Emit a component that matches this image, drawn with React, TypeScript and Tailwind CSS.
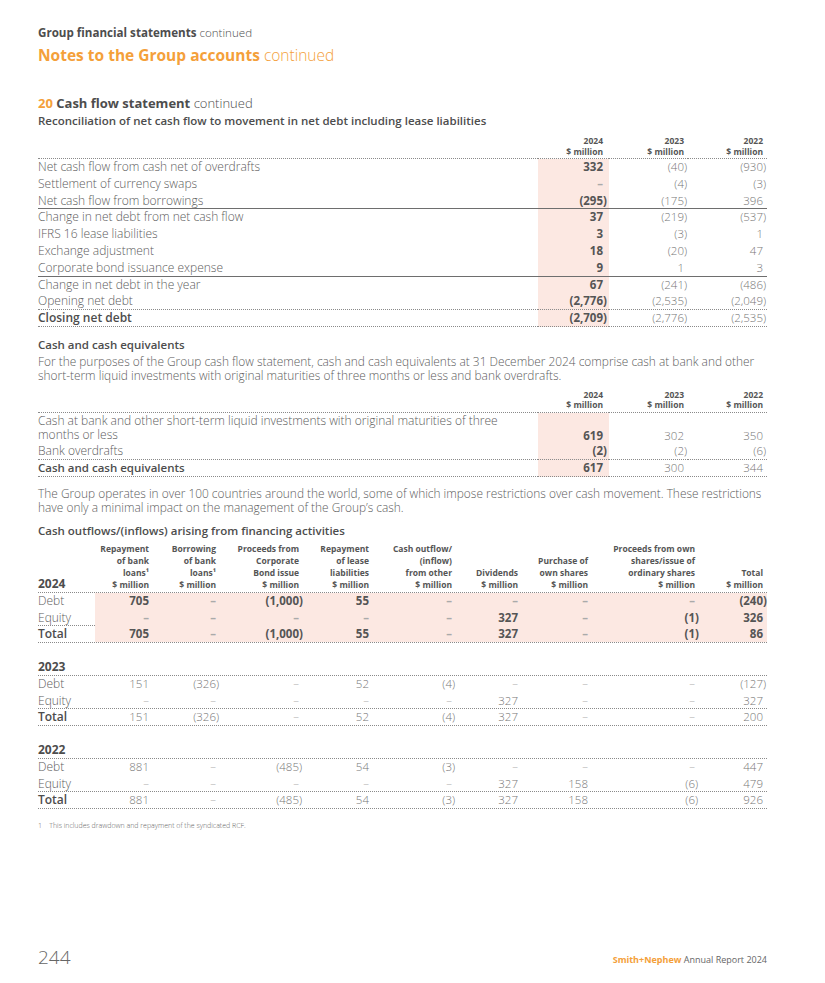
import React from "react";

const N = ({ v }: { v: string }) =>
  v.endsWith(")") ? (
    <>
      {v.slice(0, -1)}
      <span className="inline-block w-0">)</span>
    </>
  ) : (
    <>{v}</>
  );

type R1 = { l: string; a: string; b: string; c: string; line?: "solid" | "dot"; bold?: boolean };

const t1: R1[] = [
  { l: "Net cash flow from cash net of overdrafts", a: "332", b: "(40)", c: "(930)" },
  { l: "Settlement of currency swaps", a: "–", b: "(4)", c: "(3)" },
  { l: "Net cash flow from borrowings", a: "(295)", b: "(175)", c: "396", line: "solid" },
  { l: "Change in net debt from net cash flow", a: "37", b: "(219)", c: "(537)" },
  { l: "IFRS 16 lease liabilities", a: "3", b: "(3)", c: "1" },
  { l: "Exchange adjustment", a: "18", b: "(20)", c: "47" },
  { l: "Corporate bond issuance expense", a: "9", b: "1", c: "3", line: "solid" },
  { l: "Change in net debt in the year", a: "67", b: "(241)", c: "(486)" },
  { l: "Opening net debt", a: "(2,776)", b: "(2,535)", c: "(2,049)", line: "dot" },
  { l: "Closing net debt", a: "(2,709)", b: "(2,776)", c: "(2,535)", line: "dot", bold: true },
];

const lineCls = (line?: "solid" | "dot") =>
  line === "solid"
    ? "border-b border-solid border-[#6e6e6e]"
    : line === "dot"
    ? "border-b border-dotted border-[#8a8a8a]"
    : "";

const YearHead = ({ y }: { y: string }) => (
  <div className="text-[8.5px] font-bold leading-[10.5px] text-[#555] text-right">
    {y}
    <br />$ million
  </div>
);

const t3Head: string[][] = [
  ["Repayment", "of bank", "loans¹", "$ million"],
  ["Borrowing", "of bank", "loans¹", "$ million"],
  ["Proceeds from", "Corporate", "Bond issue", "$ million"],
  ["Repayment", "of lease", "liabilities", "$ million"],
  ["Cash outflow/", "(inflow)", "from other", "$ million"],
  ["Dividends", "$ million"],
  ["Purchase of", "own shares", "$ million"],
  ["Proceeds from own", "shares/issue of", "ordinary shares", "$ million"],
  ["Total", "$ million"],
];

const blocks: { y: string; rows: { l: string; v: string[] }[] }[] = [
  {
    y: "2024",
    rows: [
      { l: "Debt", v: ["705", "–", "(1,000)", "55", "–", "–", "–", "–", "(240)"] },
      { l: "Equity", v: ["–", "–", "–", "–", "–", "327", "–", "(1)", "326"] },
      { l: "Total", v: ["705", "–", "(1,000)", "55", "–", "327", "–", "(1)", "86"] },
    ],
  },
  {
    y: "2023",
    rows: [
      { l: "Debt", v: ["151", "(326)", "–", "52", "(4)", "–", "–", "–", "(127)"] },
      { l: "Equity", v: ["–", "–", "–", "–", "–", "327", "–", "–", "327"] },
      { l: "Total", v: ["151", "(326)", "–", "52", "(4)", "327", "–", "–", "200"] },
    ],
  },
  {
    y: "2022",
    rows: [
      { l: "Debt", v: ["881", "–", "(485)", "54", "(3)", "–", "–", "–", "447"] },
      { l: "Equity", v: ["–", "–", "–", "–", "–", "327", "158", "(6)", "479"] },
      { l: "Total", v: ["881", "–", "(485)", "54", "(3)", "327", "158", "(6)", "926"] },
    ],
  },
];

const G3 = "grid grid-cols-[57px_58px_67px_83px_70px_83px_66px_70px_107px_68px]";

export default function App() {
  return (
    <div className="w-[825px] h-[983px] bg-white pl-[38px] pr-[58px] flex flex-col font-['Open_Sans',sans-serif] text-[#5c5c5c]">
      {/* header */}
      <div className="mt-[25px] text-[11.6px] leading-[16px] text-[#4d4d4d]">
        <span className="font-bold">Group financial statements</span>{" "}
        <span className="font-light">continued</span>
      </div>
      <div className="mt-[4px] text-[15.5px] leading-[20px] text-[#f4a03a]">
        <span className="font-bold">Notes to the Group accounts</span>{" "}
        <span className="font-light">continued</span>
      </div>

      <div className="mt-[30px] text-[13px] leading-[16px] text-[#4d4d4d]">
        <span className="font-bold text-[#f4a03a]">20</span>{" "}
        <span className="font-bold">Cash flow statement</span>{" "}
        <span className="font-light">continued</span>
      </div>
      <div className="mt-[2px] text-[11.5px] leading-[15px] font-semibold text-[#4d4d4d]">
        Reconciliation of net cash flow to movement in net debt including lease liabilities
      </div>

      {/* table 1 */}
      <div className="mt-[6px] grid grid-cols-[500px_71px_79px_79px] text-[11.5px]">
        <div className="h-[25px] border-b border-dotted border-[#8a8a8a]" />
        <div className="h-[25px] pt-[2px] pr-[6px] border-b border-dotted border-[#8a8a8a]">
          <YearHead y="2024" />
        </div>
        <div className="h-[25px] pt-[2px] pr-[4px] border-b border-dotted border-[#8a8a8a]">
          <YearHead y="2023" />
        </div>
        <div className="h-[25px] pt-[2px] pr-[4px] border-b border-dotted border-[#8a8a8a]">
          <YearHead y="2022" />
        </div>
        {t1.map((r) => (
          <React.Fragment key={r.l}>
            <div
              className={`h-[16.8px] leading-[16px] text-[12px] ${r.bold ? "font-semibold text-[#4d4d4d]" : "font-light"} ${lineCls(r.line)}`}
            >
              {r.l}
            </div>
            <div
              className={`h-[16.8px] leading-[16px] text-right pr-[6px] bg-[#fce8e2] font-bold text-[#555] ${lineCls(r.line)}`}
            >
              {r.a === "–" ? <span className="text-[#aaa]">–</span> : <N v={r.a} />}
            </div>
            <div className={`h-[16.8px] leading-[16px] text-right pr-[4px] font-light text-[#777] ${lineCls(r.line)}`}>
              <N v={r.b} />
            </div>
            <div className={`h-[16.8px] leading-[16px] text-right pr-[4px] font-light text-[#777] ${lineCls(r.line)}`}>
              <N v={r.c} />
            </div>
          </React.Fragment>
        ))}
      </div>

      {/* cash and cash equivalents */}
      <div className="mt-[10px] text-[11.5px] leading-[15px] font-semibold text-[#4d4d4d]">
        Cash and cash equivalents
      </div>
      <div className="mt-[2px] text-[11.9px] leading-[14px] font-light">
        For the purposes of the Group cash flow statement, cash and cash equivalents at 31 December 2024 comprise cash at bank and other
        <br />
        short-term liquid investments with original maturities of three months or less and bank overdrafts.
      </div>

      <div className="mt-[7px] grid grid-cols-[500px_71px_79px_79px] text-[11.5px]">
        <div className="h-[24px] border-b border-dotted border-[#8a8a8a]" />
        <div className="h-[24px] pt-[1px] pr-[6px] border-b border-dotted border-[#8a8a8a]">
          <YearHead y="2024" />
        </div>
        <div className="h-[24px] pt-[1px] pr-[4px] border-b border-dotted border-[#8a8a8a]">
          <YearHead y="2023" />
        </div>
        <div className="h-[24px] pt-[1px] pr-[4px] border-b border-dotted border-[#8a8a8a]">
          <YearHead y="2022" />
        </div>

        <div className="h-[30px] text-[12px] leading-[14px] pt-[1px] font-light">
          Cash at bank and other short-term liquid investments with original maturities of three
          <br />
          months or less
        </div>
        <div className="h-[30px] flex items-end justify-end pr-[6px] bg-[#fce8e2] font-bold text-[#555] leading-[14px]">
          619
        </div>
        <div className="h-[30px] flex items-end justify-end pr-[4px] font-light text-[#777] leading-[14px]">302</div>
        <div className="h-[30px] flex items-end justify-end pr-[4px] font-light text-[#777] leading-[14px]">350</div>

        <div className="h-[17px] text-[12px] leading-[16px] font-light border-b border-dotted border-[#8a8a8a]">Bank overdrafts</div>
        <div className="h-[17px] leading-[16px] text-right pr-[6px] bg-[#fce8e2] font-bold text-[#555] border-b border-dotted border-[#8a8a8a]">
          <N v="(2)" />
        </div>
        <div className="h-[17px] leading-[16px] text-right pr-[4px] font-light text-[#777] border-b border-dotted border-[#8a8a8a]">
          <N v="(2)" />
        </div>
        <div className="h-[17px] leading-[16px] text-right pr-[4px] font-light text-[#777] border-b border-dotted border-[#8a8a8a]">
          <N v="(6)" />
        </div>

        <div className="h-[17px] leading-[16px] font-semibold text-[#4d4d4d] border-b border-dotted border-[#8a8a8a]">
          Cash and cash equivalents
        </div>
        <div className="h-[17px] leading-[16px] text-right pr-[6px] bg-[#fce8e2] font-bold text-[#555] border-b border-dotted border-[#8a8a8a]">
          617
        </div>
        <div className="h-[17px] leading-[16px] text-right pr-[4px] font-light text-[#777] border-b border-dotted border-[#8a8a8a]">
          300
        </div>
        <div className="h-[17px] leading-[16px] text-right pr-[4px] font-light text-[#777] border-b border-dotted border-[#8a8a8a]">
          344
        </div>
      </div>

      <div className="mt-[9px] text-[11.9px] leading-[14px] font-light">
        The Group operates in over 100 countries around the world, some of which impose restrictions over cash movement. These restrictions
        <br />
        have only a minimal impact on the management of the Group’s cash.
      </div>

      <div className="mt-[9px] text-[11.5px] leading-[15px] font-semibold text-[#4d4d4d]">
        Cash outflows/(inflows) arising from financing activities
      </div>

      {/* table 3 */}
      <div className={`mt-[5px] ${G3} border-b border-dotted border-[#8a8a8a]`}>
        <div className="flex items-end text-[12px] font-bold leading-[14px] text-[#4d4d4d] pb-[1px]">2024</div>
        {t3Head.map((h, i) => (
          <div key={i} className="flex flex-col justify-end text-right pr-[4px] text-[8.5px] font-bold leading-[12px] text-[#555] pb-[1px]">
            {h.map((t) => (
              <div key={t}>{t}</div>
            ))}
          </div>
        ))}
      </div>

      {blocks.map((b, bi) => (
        <div key={b.y} className="flex flex-col">
          {bi > 0 && (
            <div className="mt-[17px] h-[16px] text-[12px] font-bold leading-[14px] text-[#4d4d4d] border-b border-dotted border-[#8a8a8a]">
              {b.y}
            </div>
          )}
          {b.rows.map((r, ri) => {
            const hl = bi === 0;
            const line = ri > 0 ? "border-b border-dotted border-[#8a8a8a]" : "";
            return (
              <div key={r.l} className={`${G3} h-[16.7px] text-[11.5px] leading-[16px] ${line}`}>
                <div className={r.l === "Total" ? "text-[12px] font-semibold text-[#4d4d4d]" : "text-[12px] font-light"}>
                  {r.l}
                </div>
                {r.v.map((v, i) => (
                  <div
                    key={i}
                    className={`text-right pr-[4px] ${hl ? "bg-[#fce8e2] font-bold text-[#555]" : "font-light text-[#777]"}`}
                  >
                    {v === "–" ? <span className="text-[#aaa]">–</span> : <N v={v} />}
                  </div>
                ))}
              </div>
            );
          })}
        </div>
      ))}

      <div className="mt-[12px] text-[7px] leading-[10px] font-light text-[#666]">
        1&nbsp;&nbsp;&nbsp;&nbsp;This includes drawdown and repayment of the syndicated RCF.
      </div>

      {/* footer */}
      <div className="mt-auto mb-[14px] flex items-end justify-between">
        <div className="text-[19px] leading-[24px] font-light text-[#666]">244</div>
        <div className="text-[9px] leading-[12px] pb-[3px] text-[#666]">
          <span className="font-bold text-[#f4a03a]">Smith+Nephew</span> Annual Report 2024
        </div>
      </div>
    </div>
  );
}
